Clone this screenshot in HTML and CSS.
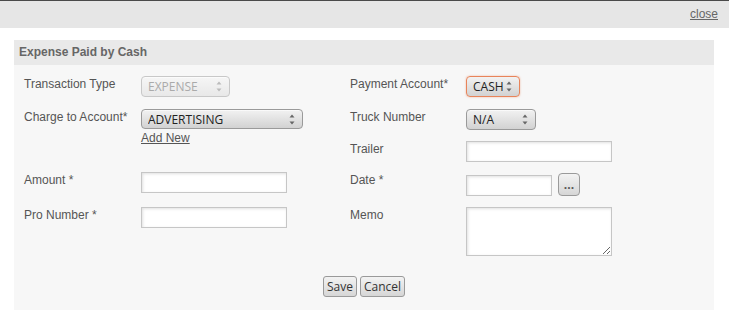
FILE: index.html
```html
<!DOCTYPE html>
<html>
<head>
    <title>Expense Paid by Cash</title>
    <meta charset="utf-8" />
    <link rel="stylesheet" href="styles.css">
</head>
<body>

<!-- Dialog top bar -->
<div class="topbar">
    <a href="#" class="close-link">close</a>
</div>

<div class="panel">
    <div class="panel-title">Expense Paid by Cash</div>

    <form class="panel-body">
        <div class="columns">
            <!-- Left column -->
            <div class="col col-left">
                <label class="lbl">Transaction Type</label>
                <div class="ctl">
                    <span class="sel-wrap">
                        <select class="sel sel-expense" disabled>
                            <option>EXPENSE</option>
                        </select>
                        <svg class="sel-arrows" width="6" height="11" viewBox="0 0 6 11"><polygon points="0.5,3.5 3,0.5 5.5,3.5"/><polygon points="0.5,7.5 3,10.5 5.5,7.5"/></svg>
                    </span>
                </div>

                <label class="lbl">Charge to Account*</label>
                <div class="ctl">
                    <span class="sel-wrap">
                        <select class="sel sel-account">
                            <option>ADVERTISING</option>
                        </select>
                        <svg class="sel-arrows" width="6" height="11" viewBox="0 0 6 11"><polygon points="0.5,3.5 3,0.5 5.5,3.5"/><polygon points="0.5,7.5 3,10.5 5.5,7.5"/></svg>
                    </span>
                    <a href="#" class="add-new">Add New</a>
                </div>

                <label class="lbl">Amount *</label>
                <div class="ctl"><input type="text" class="txt"></div>

                <label class="lbl">Pro Number *</label>
                <div class="ctl"><input type="text" class="txt"></div>
            </div>

            <!-- Right column -->
            <div class="col col-right">
                <label class="lbl">Payment Account*</label>
                <div class="ctl">
                    <span class="sel-wrap">
                        <select class="sel sel-cash">
                            <option>CASH</option>
                        </select>
                        <svg class="sel-arrows" width="6" height="11" viewBox="0 0 6 11"><polygon points="0.5,3.5 3,0.5 5.5,3.5"/><polygon points="0.5,7.5 3,10.5 5.5,7.5"/></svg>
                    </span>
                </div>

                <label class="lbl">Truck Number</label>
                <div class="ctl">
                    <span class="sel-wrap">
                        <select class="sel sel-truck">
                            <option>N/A</option>
                        </select>
                        <svg class="sel-arrows" width="6" height="11" viewBox="0 0 6 11"><polygon points="0.5,3.5 3,0.5 5.5,3.5"/><polygon points="0.5,7.5 3,10.5 5.5,7.5"/></svg>
                    </span>
                </div>

                <label class="lbl">Trailer</label>
                <div class="ctl"><input type="text" class="txt"></div>

                <label class="lbl">Date *</label>
                <div class="ctl ctl-date">
                    <input type="text" class="txt txt-date">
                    <button type="button" class="btn btn-dots">...</button>
                </div>

                <label class="lbl">Memo</label>
                <div class="ctl"><textarea class="memo"></textarea></div>
            </div>
        </div>

        <div class="actions">
            <button type="button" class="btn">Save</button>
            <button type="button" class="btn">Cancel</button>
        </div>
    </form>
</div>

</body>
</html>
```

FILE: styles.css
```css
/* Base */
body {
    margin: 0;
    background: #fff;
    font-family: "Liberation Sans", Arial, sans-serif;
    font-size: 12px;
    color: #555;
}

/* Top bar with close link */
.topbar {
    border-top: 1px solid #4a4a4a;
    background: #e6e6e6;
    height: 27px;
    line-height: 27px;
    text-align: right;
    padding-right: 11px;
}

.close-link {
    color: #666;
    font-size: 12px;
}

/* Panel */
.panel {
    margin: 12px 15px 0 14px;
    background: #f7f7f7;
}

.panel-title {
    background: #e9e9e9;
    height: 25px;
    line-height: 25px;
    padding-left: 5px;
    font-weight: bold;
    font-size: 12px;
    color: #666;
}

.panel-body {
    margin: 0;
    padding: 11px 0 13px 10px;
}

.columns {
    display: flex;
}

.col {
    display: grid;
}

.col-left {
    width: 326px;
    grid-template-columns: 117px 1fr;
    grid-template-rows: 33px 63px 35px auto;
}

.col-right {
    flex: 1;
    grid-template-columns: 116px 1fr;
    grid-template-rows: 33px 32px 31px 35px auto;
}

.lbl {
    line-height: 14px;
    padding-top: 1px;
    color: #555;
}

.ctl {
    display: flex;
    flex-direction: column;
    align-items: flex-start;
}

.ctl-date {
    flex-direction: row;
    align-items: flex-end;
    gap: 6px;
    padding-top: 1px;
    height: 23px;
}

/* Selects */
.sel-wrap {
    position: relative;
    display: inline-block;
}

.sel {
    -webkit-appearance: none;
    appearance: none;
    display: block;
    height: 21px;
    margin: 0;
    padding: 0 0 0 6px;
    border: 1px solid #9a9a9a;
    border-radius: 4px;
    background: linear-gradient(#f2f2f2, #d2d2d2);
    box-shadow: inset 0 1px 0 rgba(255,255,255,0.6);
    font-family: "Open Sans", sans-serif;
    font-size: 12px;
    color: #222;
    outline: none;
}

.sel-arrows {
    position: absolute;
    right: 8px;
    top: 5px;
    fill: #666;
    pointer-events: none;
}

.sel-expense {
    width: 89px;
    border-color: #c8c8c8;
    background: linear-gradient(#f6f6f6, #e8e8e8);
    color: #aaa;
    opacity: 1;
}

.sel-expense + .sel-arrows {
    fill: #bbb;
}

.sel-account {
    width: 162px;
    height: 20px;
}

.sel-cash {
    width: 54px;
    border-color: #e8845a;
    box-shadow: 0 0 2px rgba(232,132,90,0.6);
}

.sel-truck {
    width: 70px;
}

.add-new {
    color: #555;
    line-height: 14px;
    margin-top: 2px;
}

/* Text inputs */
.txt, .memo {
    box-sizing: border-box;
    margin: 0;
    border: 1px solid #c6c6c6;
    background: #fff;
    box-shadow: inset 1px 1px 3px rgba(0,0,0,0.12);
    outline: none;
}

.txt {
    width: 146px;
    height: 21px;
}

.txt-date {
    width: 86px;
}

.memo {
    width: 146px;
    height: 49px;
    display: block;
    resize: both;
}

/* Buttons */
.btn {
    height: 21px;
    margin: 0;
    padding: 0 3px;
    border: 1px solid #9a9a9a;
    border-radius: 3px;
    background: linear-gradient(#f3f3f3, #d6d6d6);
    font-family: "Open Sans", sans-serif;
    font-size: 12px;
    color: #333;
    cursor: pointer;
}

.btn-dots {
    width: 22px;
    height: 23px;
    border-radius: 4px;
    padding: 0;
    line-height: 1;
    font-weight: bold;
    color: #555;
}

.actions {
    display: flex;
    justify-content: center;
    gap: 3px;
    margin-top: 20px;
    padding-right: 10px;
}
```
